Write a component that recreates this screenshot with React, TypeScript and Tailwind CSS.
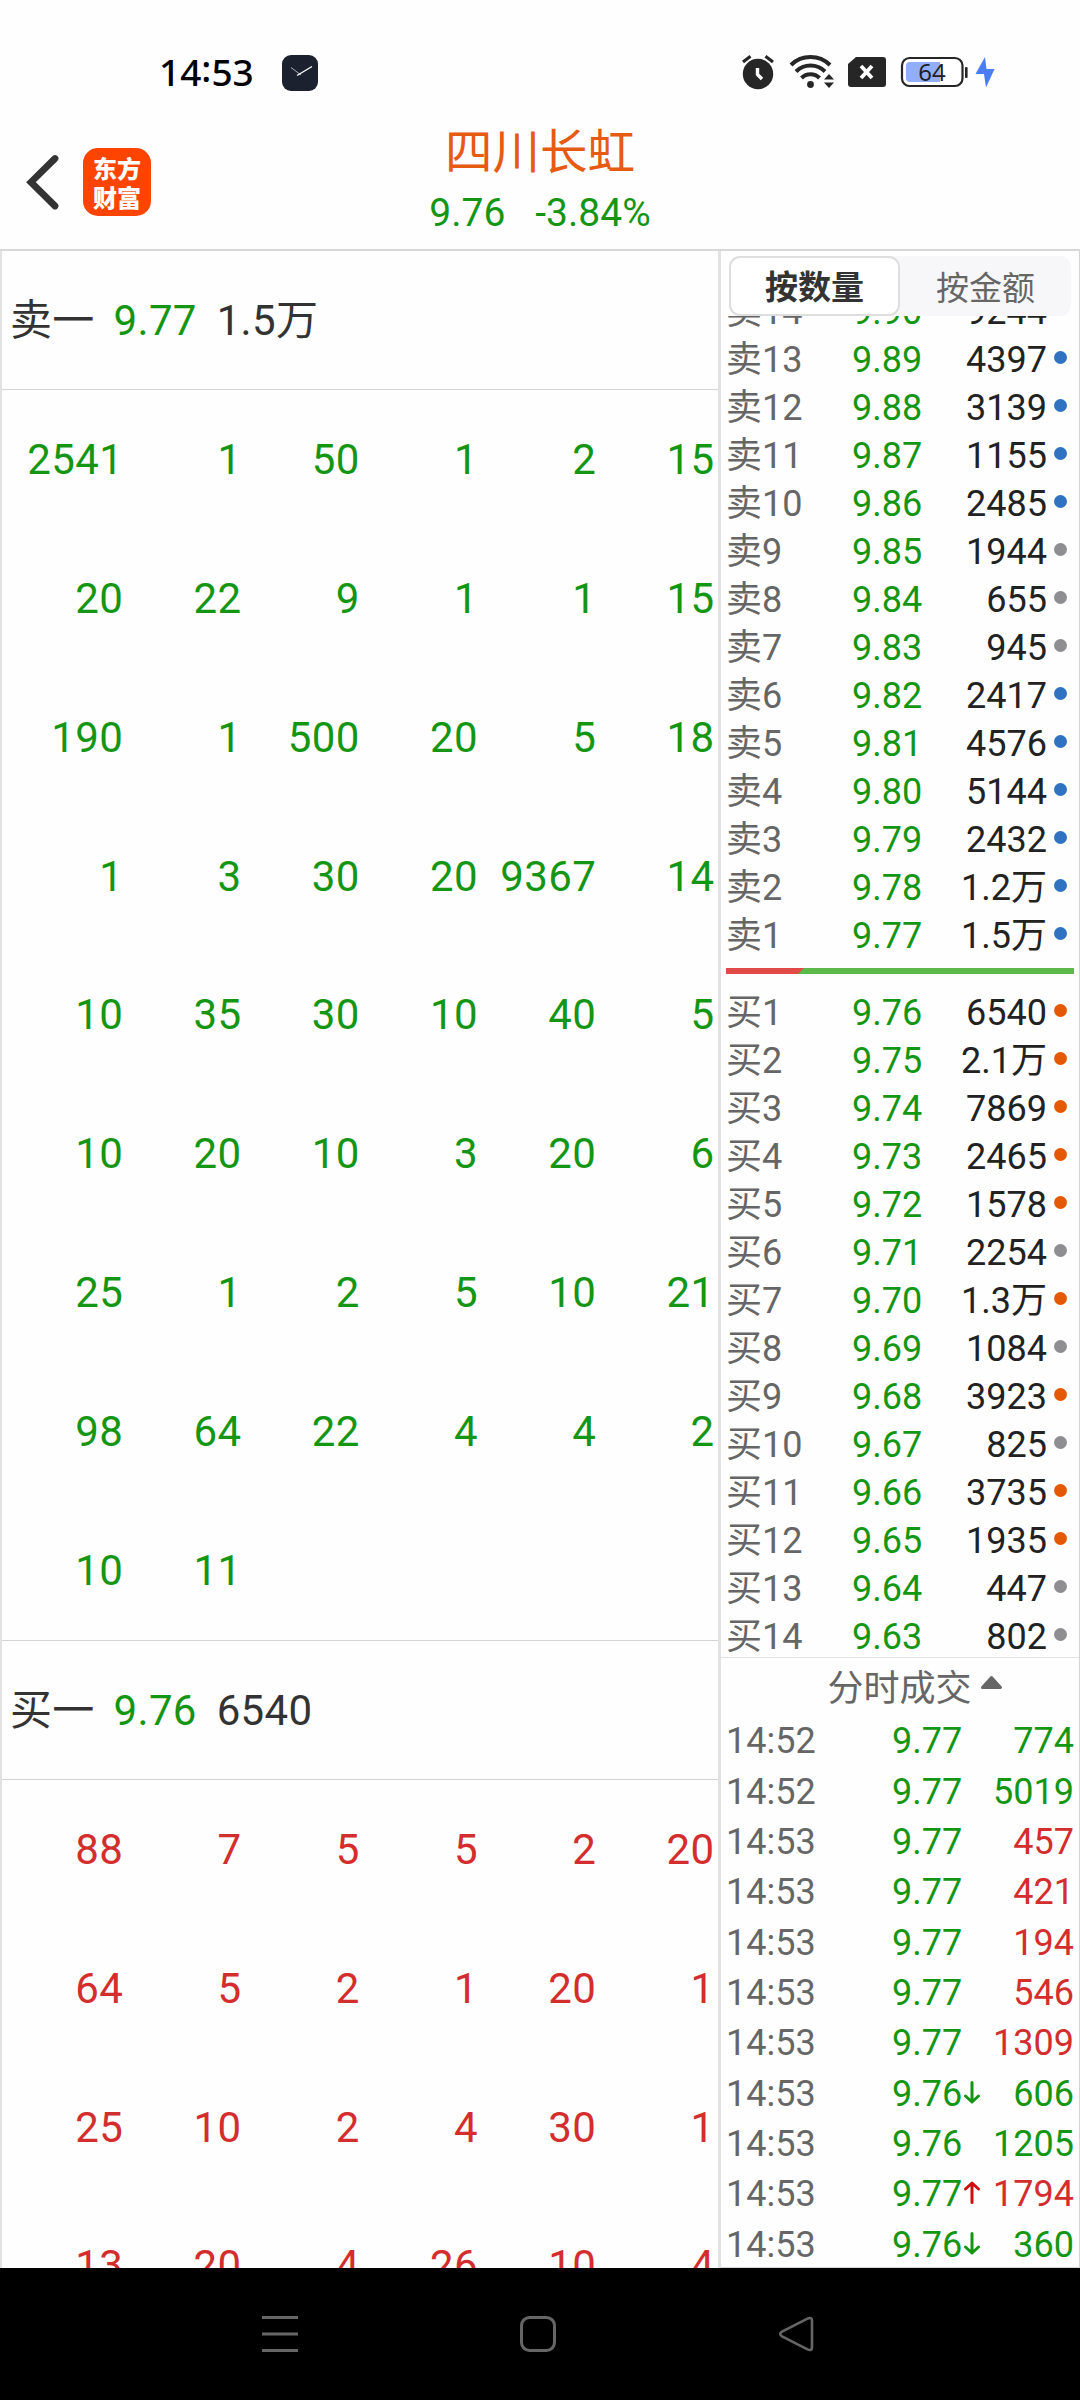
const FONT = "font-[Roboto,'Noto_Sans_CJK_SC',sans-serif]";

const GREEN = 'text-[#149614]';
const RED = 'text-[#d42d2d]';

const sellQueue = [
  ['2541', '1', '50', '1', '2', '15'],
  ['20', '22', '9', '1', '1', '15'],
  ['190', '1', '500', '20', '5', '18'],
  ['1', '3', '30', '20', '9367', '14'],
  ['10', '35', '30', '10', '40', '5'],
  ['10', '20', '10', '3', '20', '6'],
  ['25', '1', '2', '5', '10', '21'],
  ['98', '64', '22', '4', '4', '2'],
  ['10', '11', '', '', '', ''],
];

const buyQueue = [
  ['88', '7', '5', '5', '2', '20'],
  ['64', '5', '2', '1', '20', '1'],
  ['25', '10', '2', '4', '30', '1'],
  ['13', '20', '4', '26', '10', '4'],
];

const BLUE = 'bg-[#2f73c0]';
const ORANGE = 'bg-[#e65904]';
const GRAY = 'bg-[#8e8e93]';

const sells = [
  ['卖14', '9.90', '9244', BLUE],
  ['卖13', '9.89', '4397', BLUE],
  ['卖12', '9.88', '3139', BLUE],
  ['卖11', '9.87', '1155', BLUE],
  ['卖10', '9.86', '2485', BLUE],
  ['卖9', '9.85', '1944', GRAY],
  ['卖8', '9.84', '655', GRAY],
  ['卖7', '9.83', '945', GRAY],
  ['卖6', '9.82', '2417', BLUE],
  ['卖5', '9.81', '4576', BLUE],
  ['卖4', '9.80', '5144', BLUE],
  ['卖3', '9.79', '2432', BLUE],
  ['卖2', '9.78', '1.2万', BLUE],
  ['卖1', '9.77', '1.5万', BLUE],
];

const buys = [
  ['买1', '9.76', '6540', ORANGE],
  ['买2', '9.75', '2.1万', ORANGE],
  ['买3', '9.74', '7869', ORANGE],
  ['买4', '9.73', '2465', ORANGE],
  ['买5', '9.72', '1578', ORANGE],
  ['买6', '9.71', '2254', GRAY],
  ['买7', '9.70', '1.3万', ORANGE],
  ['买8', '9.69', '1084', GRAY],
  ['买9', '9.68', '3923', ORANGE],
  ['买10', '9.67', '825', GRAY],
  ['买11', '9.66', '3735', ORANGE],
  ['买12', '9.65', '1935', ORANGE],
  ['买13', '9.64', '447', GRAY],
  ['买14', '9.63', '802', GRAY],
];

const ticks = [
  ['14:52', '9.77', '', '774', GREEN],
  ['14:52', '9.77', '', '5019', GREEN],
  ['14:53', '9.77', '', '457', RED],
  ['14:53', '9.77', '', '421', RED],
  ['14:53', '9.77', '', '194', RED],
  ['14:53', '9.77', '', '546', RED],
  ['14:53', '9.77', '', '1309', RED],
  ['14:53', '9.76', 'down', '606', GREEN],
  ['14:53', '9.76', '', '1205', GREEN],
  ['14:53', '9.77', 'up', '1794', RED],
  ['14:53', '9.76', 'down', '360', GREEN],
];

function StatusBar() {
  return (
    <div className="flex h-[110px] items-start pt-[54px]">
      <div className="-mt-px ml-[159px] flex h-9 w-[123px] items-center font-['Noto_Sans',sans-serif] text-[37px] font-medium leading-none text-black">
        <span>14</span>
        <span className="-mt-[7px]">:</span>
        <span>53</span>
      </div>
      <svg className="mt-px h-9 w-9" viewBox="0 0 36 36">
        <rect width="36" height="36" rx="9" fill="#1c2130" />
        <path d="M9 12.5 L19 20" stroke="#aeb2ba" strokeWidth="1" fill="none" />
        <path d="M15 20.5 L30 11.5" stroke="#fff" strokeWidth="1.3" fill="none" />
      </svg>
      <svg className="ml-[424px] mt-[1px] h-9 w-[260px]" viewBox="742 55 260 36">
        {/* alarm */}
        <g fill="#262626" stroke="none">
          <circle cx="758" cy="74" r="15.2" />
          <path d="M743 62 L750.5 56.3 M773 62 L765.5 56.3" stroke="#262626" strokeWidth="3.2" />
          <path d="M757.5 68 V74.5 L762 79" stroke="#fff" strokeWidth="3.4" fill="none" />
        </g>
        {/* wifi with traffic arrows */}
        <g fill="none" stroke="#262626" strokeWidth="4">
          <path d="M791 65 A28 28 0 0 1 830 65" />
          <path d="M796 71.5 A20.5 20.5 0 0 1 825 71.5" />
          <path d="M801.5 78 A12.5 12.5 0 0 1 819.5 78" />
        </g>
        <circle cx="810.5" cy="84.5" r="3.4" fill="#262626" />
        <path d="M824 79.5 L829 74 L834 79.5 Z M824 82.5 L829 88 L834 82.5 Z" fill="#262626" />
        {/* sim without service */}
        <path d="M856 57 H883 Q886 57 886 60 V84 Q886 87 883 87 H851 Q848 87 848 84 V64 Z" fill="#262626" />
        <path d="M861 66 L872 78 M872 66 L861 78" stroke="#fff" strokeWidth="3.8" />
        {/* battery */}
        <rect x="902" y="58" width="60.5" height="28" rx="7.5" fill="#fff" stroke="#262626" strokeWidth="2.2" />
        <path d="M940 62 H910 Q906 62 906 66 V78 Q906 82 910 82 H940 Z" fill="#93aef8" />
        <rect x="965" y="67" width="2.6" height="11" rx="1" fill="#262626" />
        <text x="932" y="80.7" textAnchor="middle" fontFamily="Noto Sans" fontSize="24" fill="#1c1f2c">64</text>
        <path d="M985 57 L975.5 74 H984 L986 87.5 L994.5 69 H986.5 Z" fill="#4a7cf3" />
      </svg>
    </div>
  );
}

function TitleBar() {
  return (
    <header className="grid h-[139px] grid-cols-3 items-start">
      <div className="flex items-center pl-6 pt-[38px]">
        <svg className="h-[68px] w-[38px]" viewBox="0 0 38 68">
          <path d="M31 10.5 L7 34.2 L31 58" fill="none" stroke="#333" strokeWidth="6.8" strokeLinecap="round" />
        </svg>
        <div className="ml-[21px] flex h-[68px] w-[68px] flex-col items-center justify-center rounded-[15px] bg-[#ff4400] pb-px font-['Noto_Sans_CJK_SC',sans-serif] text-[24px] font-black leading-[29px] text-white">
          <span>东方</span>
          <span>财富</span>
        </div>
      </div>
      <div className="flex flex-col items-center">
        <h1 className="mt-[15px] text-[47.5px] leading-[56px] text-[#e65a12]">四川长虹</h1>
        <div className={`mt-[9px] flex gap-[30px] text-[39px] leading-[46px] ${GREEN}`}>
          <span>9.76</span>
          <span>-3.84%</span>
        </div>
      </div>
    </header>
  );
}

function QueueHeader({ label, price, volume }: { label: string; price: string; volume: string }) {
  return (
    <div className="flex h-[138.9px] items-center border-b border-[#d4d4d4] pl-[8px] pt-[2px] text-[42px] tracking-[0.3px] text-[#333]">
      <span>{label}</span>
      <span className={`ml-[19px] ${GREEN}`}>{price}</span>
      <span className="ml-5">{volume}</span>
    </div>
  );
}

function QueueGrid({ rows, tone }: { rows: string[][]; tone: string }) {
  return (
    <div className={`ml-[3px] grid w-[709.5px] grid-cols-6 text-right text-[42px] tracking-[0.4px] ${tone}`}>
      {rows.flatMap((row, r) =>
        row.map((v, c) => (
          <span key={`${r}-${c}`} className="h-[138.9px] leading-[140.5px]">
            {v}
          </span>
        )),
      )}
    </div>
  );
}

function DepthRow({ row }: { row: string[] }) {
  return (
    <div className="flex h-12 shrink-0 items-center text-[36px] leading-[48px]">
      <span className="w-[126px] pt-[2px] text-[#666]">{row[0]}</span>
      <span className={`w-[76px] pt-[2px] ${GREEN}`}>{row[1]}</span>
      <span className="flex-1 pt-[2px] text-right text-[#222]">{row[2]}</span>
      <span className={`-mt-[4px] ml-[7px] mr-[6px] h-[13px] w-[13px] rounded-full ${row[3]}`} />
    </div>
  );
}

function TickArrow({ dir }: { dir: string }) {
  if (!dir) return null;
  return (
    <svg className="-mt-1 ml-px h-6 w-[18px]" viewBox="0 0 18 24" fill="none" strokeWidth="3" strokeLinecap="round" strokeLinejoin="round">
      {dir === 'down' ? (
        <path d="M9 2.5 V22 M2.5 16 L9 22 L15.5 16" stroke="#149614" />
      ) : (
        <path d="M9 22.5 V3 M2.5 9 L9 3 L15.5 9" stroke="#cc1010" />
      )}
    </svg>
  );
}

function SidePanel() {
  return (
    <aside className="flex w-[359px] flex-col border-b border-r border-[#d4d4d4] pl-[5px]">
      <div className="ml-[3px] mt-[5px] flex h-[60px] w-[342px] shrink-0 rounded-[11px] bg-[#f7f7f9] text-[33px] leading-[59px]">
        <div className="w-[171px] rounded-[11px] border-2 border-[#dedede] bg-white text-center font-bold text-[#333]">按数量</div>
        <div className="flex-1 pt-[3px] text-center text-[#666]">按金额</div>
      </div>
      <div className="flex h-[643px] shrink-0 flex-col justify-end overflow-hidden pr-[6px]">
        {sells.map((r) => (
          <DepthRow key={r[0]} row={r} />
        ))}
      </div>
      <svg className="mt-[9px] h-[6px] w-[348px] shrink-0" viewBox="0 0 348 6">
        <rect width="348" height="6" fill="#5cb848" />
        <path d="M0 0 H78 L72 6 H0 Z" fill="#e24a48" />
      </svg>
      <div className="mt-[14px] h-[669px] shrink-0 pr-[6px]">
        {buys.map((r) => (
          <DepthRow key={r[0]} row={r} />
        ))}
      </div>
      <div className="-ml-[5px] flex h-[58px] shrink-0 items-center justify-center border-t border-[#e2e2e2] pl-[31px] pr-[1px] text-[36px] text-[#666]">
        <span className="pt-[4px]">分时成交</span>
        <svg className="-mt-[8px] ml-[8px] h-[15px] w-[23px]" viewBox="0 0 23 15">
          <path d="M11.5 2.5 L20.5 12.5 H2.5 Z" fill="#666" stroke="#666" strokeWidth="3" strokeLinejoin="round" />
        </svg>
      </div>
      <div className="pr-[5px] pt-px">
        {ticks.map((t, i) => (
          <div key={i} className="flex h-[50.37px] items-center text-[36px] leading-[50px]">
            <span className="w-[166px] text-[#666]">{t[0]}</span>
            <span className={GREEN}>{t[1]}</span>
            <TickArrow dir={t[2]} />
            <span className={`flex-1 text-right ${t[4]}`}>{t[3]}</span>
          </div>
        ))}
      </div>
    </aside>
  );
}

function NavBar() {
  return (
    <nav className="flex h-[132px] items-center bg-black">
      <svg className="ml-[261px] h-10 w-[38px]" viewBox="0 0 38 40" stroke="#666" strokeWidth="3">
        <path d="M1 3.5 H37 M1 20 H37 M1 36.5 H37" />
      </svg>
      <svg className="ml-[220px] h-[38px] w-[38px]" viewBox="0 0 38 38" fill="none" stroke="#666" strokeWidth="3">
        <rect x="2.5" y="2.5" width="33" height="33" rx="8" />
      </svg>
      <svg className="ml-[220px] h-[38px] w-[38px]" viewBox="0 0 38 38" fill="none" stroke="#666" strokeWidth="2.6">
        <path d="M30.5 3.6 Q35 1.5 35 6 V32 Q35 36.5 30.5 34.4 L5 21.3 Q1.5 19 5 16.7 Z" />
      </svg>
    </nav>
  );
}

export default function App() {
  return (
    <div className={`flex h-[2400px] w-[1080px] flex-col overflow-hidden bg-[#fefefe] ${FONT}`}>
      <StatusBar />
      <TitleBar />
      <main className="flex h-[2019px] border-t-2 border-[#d8d8d8]">
        <section className="w-[721px] shrink-0 overflow-hidden border-l-2 border-r-[3px] border-[#e2e2e2]">
          <QueueHeader label="卖一" price="9.77" volume="1.5万" />
          <div className="border-b border-[#d4d4d4]">
            <QueueGrid rows={sellQueue} tone={GREEN} />
          </div>
          <QueueHeader label="买一" price="9.76" volume="6540" />
          <QueueGrid rows={buyQueue} tone={RED} />
        </section>
        <SidePanel />
      </main>
      <NavBar />
    </div>
  );
}
